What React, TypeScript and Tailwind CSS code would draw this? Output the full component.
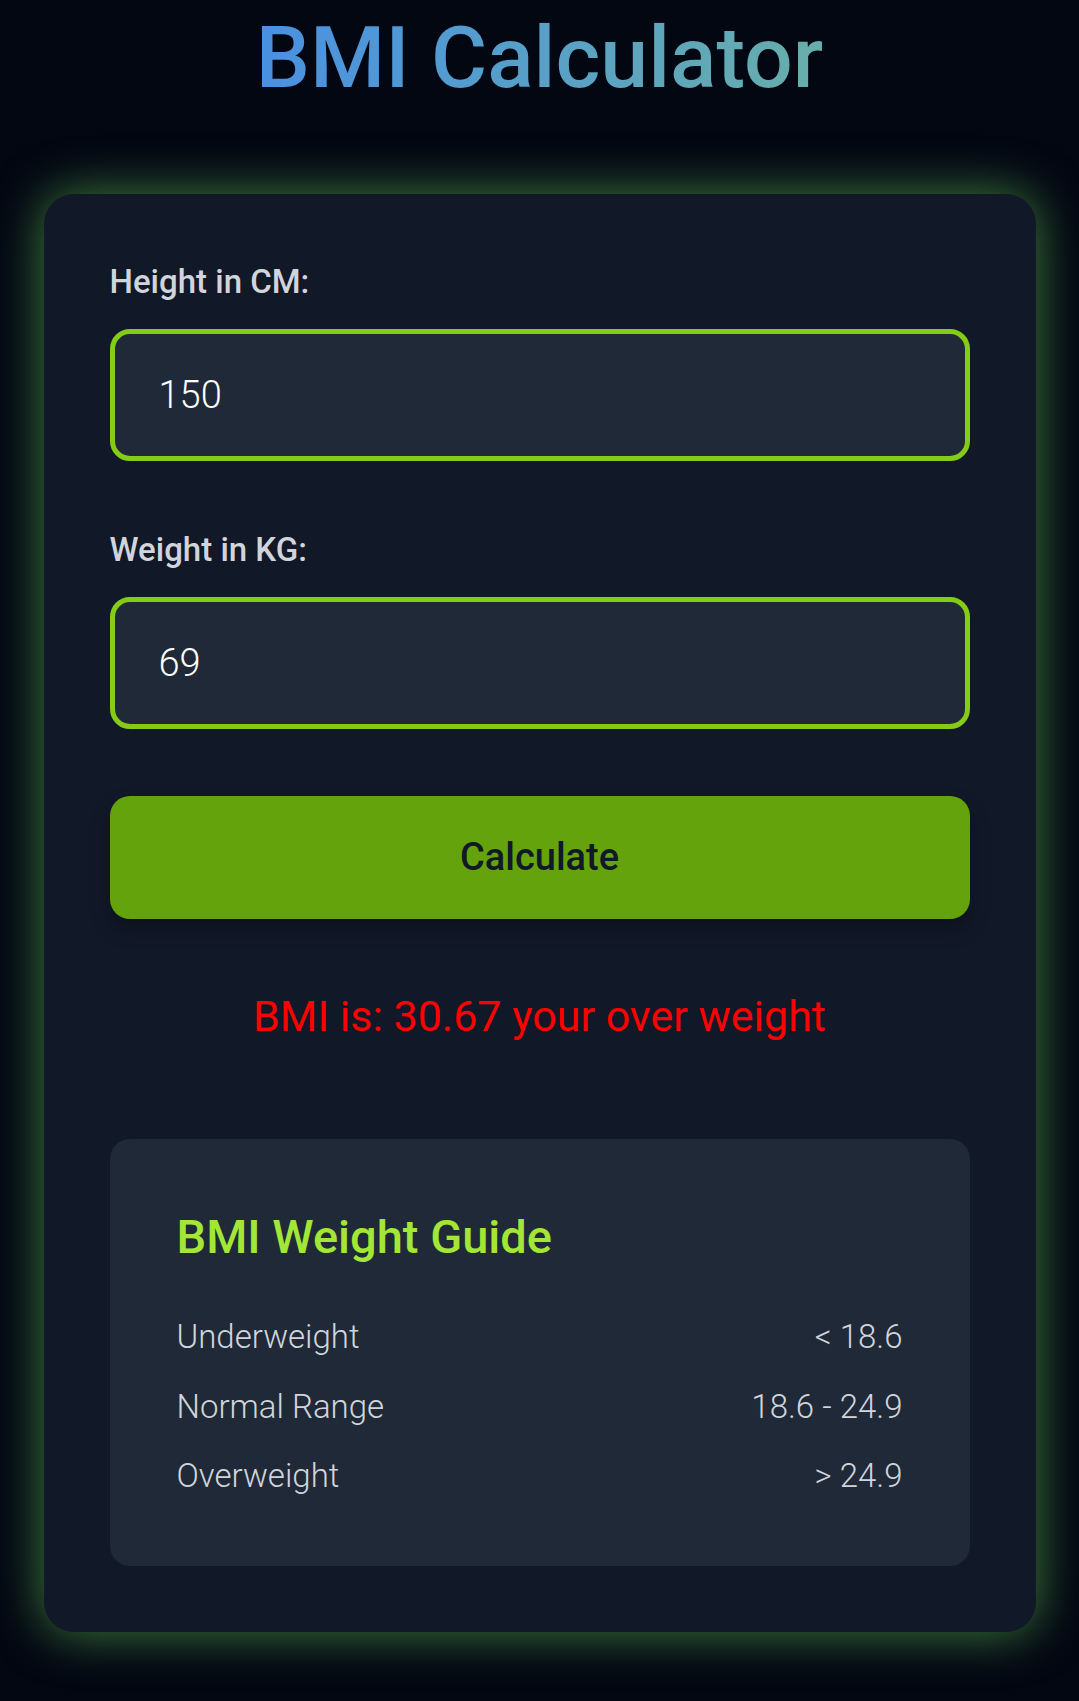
import React from "react";

const guide = [
  { label: "Underweight", range: "< 18.6" },
  { label: "Normal Range", range: "18.6 - 24.9" },
  { label: "Overweight", range: "> 24.9" },
];

const Field = ({ label, value }: { label: string; value: string }) => (
  <div className="flex flex-col">
    <label className="text-[33px] leading-[40px] font-medium text-[#d1d5db]">
      {label}
    </label>
    <input
      type="text"
      defaultValue={value}
      className="mt-[27px] h-[132px] w-full rounded-[20px] border-[5px] border-[#84cc16] bg-[#1f2937] pl-[44px] text-[38px] font-light text-white outline-none"
    />
  </div>
);

const App = () => {
  return (
    <main className="min-h-screen bg-[#030712] pb-[68px] font-['Roboto',sans-serif]">
      <div className="flex justify-center pt-[14px]">
        <h1 className="inline-block bg-gradient-to-r from-[#4a90e2] to-[#68aeaa] bg-clip-text text-[86px] leading-[87px] font-medium text-transparent">
          BMI Calculator
        </h1>
      </div>

      <section className="mx-auto mt-[93px] w-[992px] rounded-[30px] bg-[#111827] px-[66px] pt-[68px] pb-[66px] shadow-[0_0_50px_rgba(86,170,80,0.75)]">
        <Field label="Height in CM:" value="150" />
        <div className="mt-[69px]">
          <Field label="Weight in KG:" value="69" />
        </div>

        <button className="mt-[67px] h-[123px] w-full rounded-[20px] bg-[#65a30d] text-[38px] font-medium text-[#111827] shadow-[0_10px_20px_rgba(0,0,0,0.25)]">
          Calculate
        </button>

        <p className="mt-[72px] text-center text-[43px] leading-[50px] text-[#ff0000]">
          BMI is: 30.67 your over weight
        </p>

        <div className="mt-[98px] rounded-[20px] bg-[#1f2937] px-[67px] pt-[70px] pb-[70px]">
          <h3 className="text-[47px] leading-[56px] font-medium text-[#a3e635]">
            BMI Weight Guide
          </h3>
          <ul className="mt-[52px] flex flex-col gap-[29.5px]">
            {guide.map((g) => (
              <li
                key={g.label}
                className="flex justify-between text-[33px] leading-[40px] font-light text-[#d1d5db]"
              >
                <span>{g.label}</span>
                <span>{g.range}</span>
              </li>
            ))}
          </ul>
        </div>
      </section>
    </main>
  );
};

export default App;
